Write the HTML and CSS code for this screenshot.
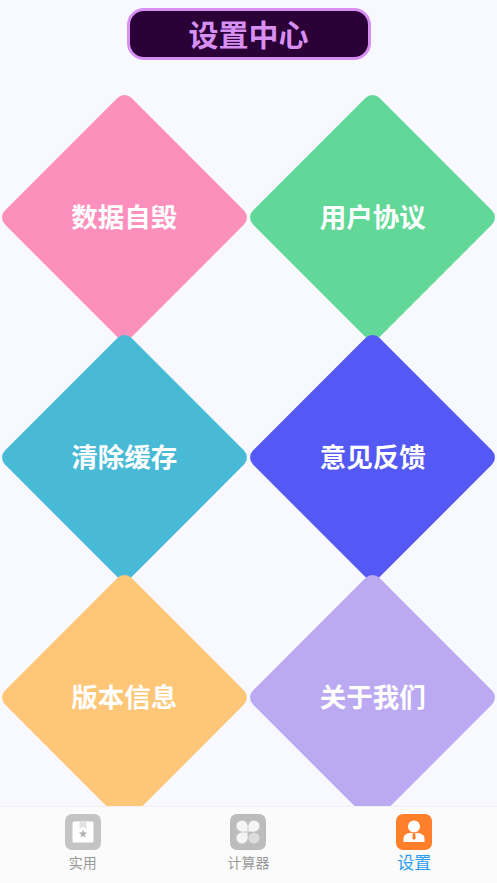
FILE: index.html
```html
<!DOCTYPE html>
<html lang="zh-CN">
<head>
<meta charset="utf-8">
<title>设置中心</title>
<link rel="stylesheet" href="styles.css">
</head>
<body>
<div class="page">
  <main class="content">
    <header class="title-wrap"><h1 class="title">设置中心</h1></header>
    <section class="grid">
      <a class="cell"><span class="diamond pink"></span><span class="label">数据自毁</span></a>
      <a class="cell"><span class="diamond green"></span><span class="label">用户协议</span></a>
      <a class="cell"><span class="diamond blue"></span><span class="label">清除缓存</span></a>
      <a class="cell"><span class="diamond indigo"></span><span class="label">意见反馈</span></a>
      <a class="cell"><span class="diamond orange"></span><span class="label">版本信息</span></a>
      <a class="cell"><span class="diamond purple"></span><span class="label">关于我们</span></a>
    </section>
  </main>
  <nav class="tabbar">
    <a class="tab">
      <svg class="tab-icon" viewBox="0 0 36 36"><rect width="36" height="36" rx="7" fill="#c4c4c4"/><rect x="7.500" y="7.500" width="21" height="21" rx="1.500" fill="#fff"/><path d="M14.500 7.500h7v7.500l-3.500-2-3.500 2z" fill="#e2e2e2"/><path d="M18 15.500l1.150 2.800 3 .2-2.300 1.950.75 2.950-2.600-1.600-2.600 1.600.75-2.950-2.300-1.950 3-.2z" fill="#b4b4b4"/></svg>
      <span class="tab-label">实用</span>
    </a>
    <a class="tab">
      <svg class="tab-icon" viewBox="0 0 36 36"><rect width="36" height="36" rx="7" fill="#bcbcbc"/><circle cx="12" cy="12" r="5.600" fill="#f4f4f4"/><rect x="12" y="12" width="5.600" height="5.600" fill="#f4f4f4"/><circle cx="24" cy="12" r="5.600" fill="#f4f4f4"/><rect x="18.400" y="12" width="5.600" height="5.600" fill="#f4f4f4"/><circle cx="12" cy="24" r="5.600" fill="#f4f4f4"/><rect x="12" y="18.400" width="5.600" height="5.600" fill="#f4f4f4"/><circle cx="24" cy="24" r="5.600" fill="#dcdcdc"/></svg>
      <span class="tab-label">计算器</span>
    </a>
    <a class="tab active">
      <svg class="tab-icon" viewBox="0 0 36 36"><rect width="36" height="36" rx="7" fill="#ff7f2a"/><circle cx="18" cy="12.500" r="6" fill="#fff"/><path d="M7.500 28v-3.500c0-3.500 3-5 6.500-5.500h8c3.500.5 6.500 2 6.500 5.500V28z" fill="#fff"/><path d="M16.800 19h2.400l.5 5.500-1.700 1.500-1.700-1.500z" fill="#ff7f2a"/></svg>
      <span class="tab-label">设置</span>
    </a>
  </nav>
</div>
</body>
</html>
```
FILE: styles.css
```css
* { box-sizing: border-box; margin: 0; padding: 0; }
html, body { height: 100%; }
body {
  background: #f8f8ff;
  font-family: "Noto Sans CJK SC", "Noto Sans", sans-serif;
  overflow: hidden;
}
.page { height: 883px; display: flex; flex-direction: column; }
.content { flex: 1; min-height: 0; overflow: hidden; }
.title-wrap { display: flex; justify-content: center; padding-top: 8px; padding-bottom: 37px; }
.title {
  width: 244px;
  height: 52px;
  background: #2a0036;
  border: 3px solid #d78ff2;
  border-radius: 17px;
  color: #d78ff2;
  font-size: 30px;
  font-weight: 700;
  line-height: 44px;
  text-align: center;
}
.grid { display: grid; grid-template-columns: 1fr 1fr; grid-auto-rows: 240px; }
.cell { position: relative; display: flex; align-items: center; justify-content: center; }
.diamond {
  position: absolute;
  left: 50%;
  top: 50%;
  width: 179px;
  height: 179px;
  margin: -89.5px 0 0 -89.5px;
  border-radius: 10px;
  transform: rotate(45deg);
}
.label { position: relative; color: #fff; font-size: 26.5px; font-weight: 700; line-height: 36px; padding-bottom: 2px; }
.pink { background: #fd8fbc; }
.green { background: #61d897; }
.blue { background: #48bad6; }
.indigo { background: #5458f4; }
.orange { background: #fec677; }
.purple { background: #bbaaf2; }
.tabbar {
  height: 77px;
  flex: none;
  display: grid;
  grid-template-columns: repeat(3, 1fr);
  background: #fbfbfb;
  border-top: 1px solid #f0f0f4;
}
.tab { display: flex; flex-direction: column; align-items: center; padding-top: 7px; color: #999; }
.tab-icon { width: 36px; height: 36px; display: block; }
.tab-label { font-size: 14px; line-height: 24px; }
.active { color: #2d9cf0; }
.active .tab-label { font-size: 17px; }
```
